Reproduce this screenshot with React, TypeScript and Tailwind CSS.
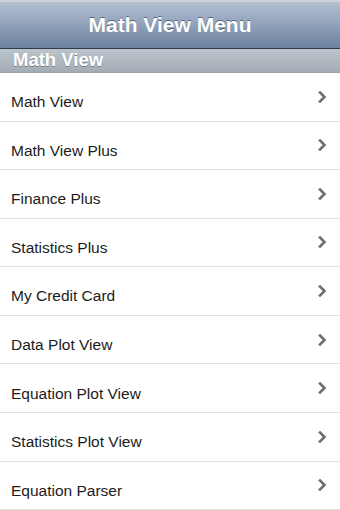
const items = [
  "Math View",
  "Math View Plus",
  "Finance Plus",
  "Statistics Plus",
  "My Credit Card",
  "Data Plot View",
  "Equation Plot View",
  "Statistics Plot View",
  "Equation Parser",
];

function Chevron() {
  return (
    <svg width="9" height="12" viewBox="0 0 9 12" className="shrink-0">
      <path
        d="M2 1.5 L6.5 6 L2 10.5"
        fill="none"
        stroke="#6f6f6f"
        strokeWidth="2.6"
        strokeLinecap="square"
        strokeLinejoin="miter"
      />
    </svg>
  );
}

export default function App() {
  return (
    <div className="h-[510px] w-[340px] overflow-hidden bg-white font-['Liberation_Sans',Arial,sans-serif]">
      <header className="h-[49px] border-t-2 border-t-[#cfd4db] border-b border-b-[#2f3b4d] bg-gradient-to-b from-[#b4c0d1] to-[#6c82a0] flex items-center justify-center">
        <h1 className="text-[21px] font-bold text-white [text-shadow:0_-1px_0_rgba(40,55,80,0.6)]">
          Math View Menu
        </h1>
      </header>

      <div className="h-[24px] border-b border-b-[#9aa2aa] bg-gradient-to-b from-[#bcc4cb] to-[#a3acb4] flex items-center pl-[13px]">
        <span className="text-[18.5px] font-bold leading-none text-white [text-shadow:0_1px_0_rgba(70,80,90,0.55)]">
          Math View
        </span>
      </div>

      <ul>
        {items.map((label) => (
          <li
            key={label}
            className="h-[48.57px] border-b border-b-[#e2e2e2] flex items-center justify-between pl-[11px] pr-[13px]"
          >
            <span className="pt-[10px] text-[15.5px] text-[#1c1c1c]">{label}</span>
            <Chevron />
          </li>
        ))}
      </ul>
    </div>
  );
}
